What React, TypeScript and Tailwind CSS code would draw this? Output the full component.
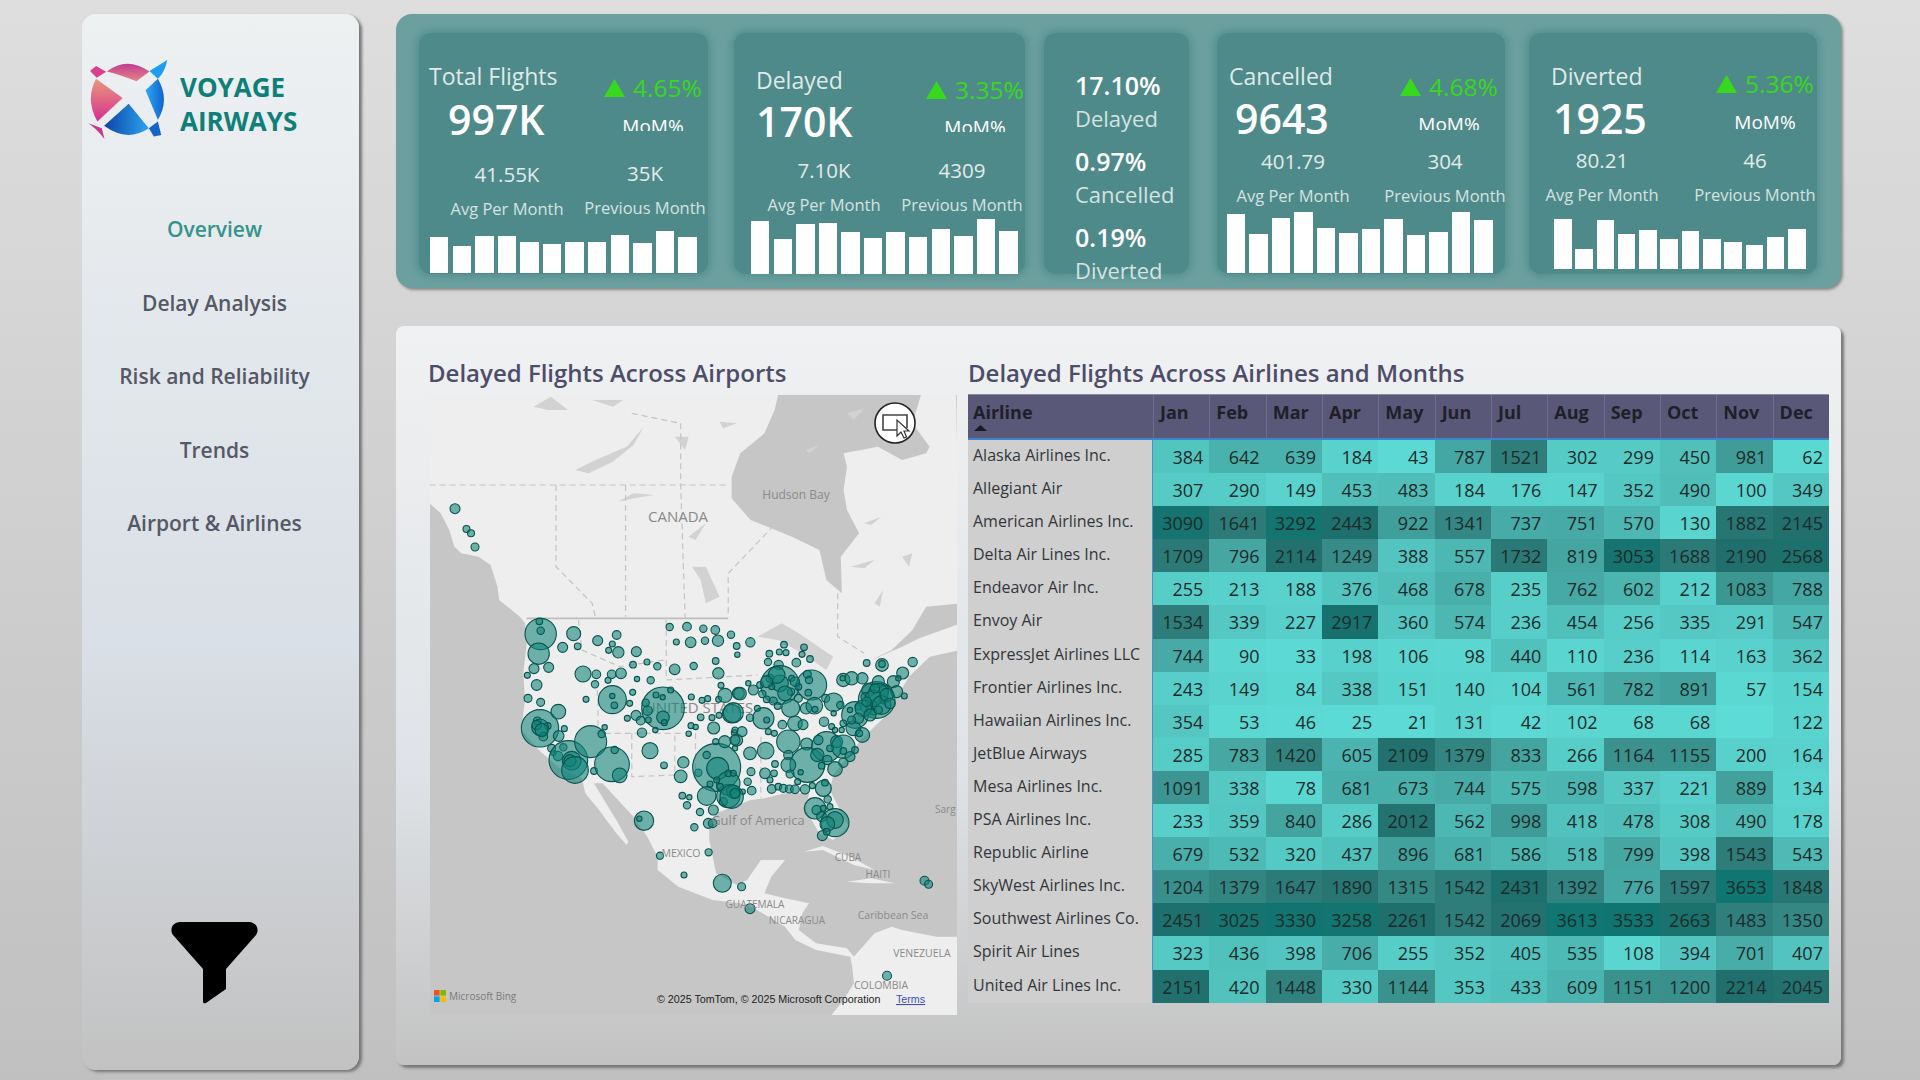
const navItems = ["Overview", "Delay Analysis", "Risk and Reliability", "Trends", "Airport & Airlines"];
const months = ["Jan", "Feb", "Mar", "Apr", "May", "Jun", "Jul", "Aug", "Sep", "Oct", "Nov", "Dec"];

const rows: [string, (number | null)[]][] = [
  ["Alaska Airlines Inc.", [384, 642, 639, 184, 43, 787, 1521, 302, 299, 450, 981, 62]],
  ["Allegiant Air", [307, 290, 149, 453, 483, 184, 176, 147, 352, 490, 100, 349]],
  ["American Airlines Inc.", [3090, 1641, 3292, 2443, 922, 1341, 737, 751, 570, 130, 1882, 2145]],
  ["Delta Air Lines Inc.", [1709, 796, 2114, 1249, 388, 557, 1732, 819, 3053, 1688, 2190, 2568]],
  ["Endeavor Air Inc.", [255, 213, 188, 376, 468, 678, 235, 762, 602, 212, 1083, 788]],
  ["Envoy Air", [1534, 339, 227, 2917, 360, 574, 236, 454, 256, 335, 291, 547]],
  ["ExpressJet Airlines LLC", [744, 90, 33, 198, 106, 98, 440, 110, 236, 114, 163, 362]],
  ["Frontier Airlines Inc.", [243, 149, 84, 338, 151, 140, 104, 561, 782, 891, 57, 154]],
  ["Hawaiian Airlines Inc.", [354, 53, 46, 25, 21, 131, 42, 102, 68, 68, null, 122]],
  ["JetBlue Airways", [285, 783, 1420, 605, 2109, 1379, 833, 266, 1164, 1155, 200, 164]],
  ["Mesa Airlines Inc.", [1091, 338, 78, 681, 673, 744, 575, 598, 337, 221, 889, 134]],
  ["PSA Airlines Inc.", [233, 359, 840, 286, 2012, 562, 998, 418, 478, 308, 490, 178]],
  ["Republic Airline", [679, 532, 320, 437, 896, 681, 586, 518, 799, 398, 1543, 543]],
  ["SkyWest Airlines Inc.", [1204, 1379, 1647, 1890, 1315, 1542, 2431, 1392, 776, 1597, 3653, 1848]],
  ["Southwest Airlines Co.", [2451, 3025, 3330, 3258, 2261, 1542, 2069, 3613, 3533, 2663, 1483, 1350]],
  ["Spirit Air Lines", [323, 436, 398, 706, 255, 352, 405, 535, 108, 394, 701, 407]],
  ["United Air Lines Inc.", [2151, 420, 1448, 330, 1144, 353, 433, 609, 1151, 1200, 2214, 2045]],
];

// heat colour stops, eyeballed from the matrix
const stops: [number, number[]][] = [
  [0, [93, 219, 214]],
  [300, [86, 203, 198]],
  [800, [69, 166, 162]],
  [1500, [47, 126, 123]],
  [2200, [32, 111, 108]],
  [3700, [14, 118, 114]],
];

function heat(v: number | null) {
  if (v === null) return "rgb(93,219,214)";
  for (let i = 1; i < stops.length; i++) {
    if (v <= stops[i][0]) {
      const [a, ca] = stops[i - 1];
      const [b, cb] = stops[i];
      const t = (v - a) / (b - a);
      return `rgb(${ca.map((c, j) => Math.round(c + (cb[j] - c) * t)).join(",")})`;
    }
  }
  return "rgb(14,118,114)";
}

const kpis = [
  {
    title: "Total Flights", value: "997K", delta: "4.65%", avg: "41.55K", prev: "35K",
    bars: [36, 27, 37, 37, 31, 29, 31, 31, 38, 30, 42, 36],
    card: "w-[289px]", upper: "h-[126px]", titleBox: "pt-[28px] pl-[10px] w-[185px]", valueBox: "pl-[19px] mt-[3px]",
    deltaBox: "pt-[40px]", momBox: "w-[98px] h-[28px] pt-[10px]", avgBox: "w-[176px] pt-[1px]", prevBox: "w-[100px]",
    barBox: "pl-[11px] pb-[1px] gap-[4.2px]", barW: "w-[18.4px]",
  },
  {
    title: "Delayed", value: "170K", delta: "3.35%", avg: "7.10K", prev: "4309",
    bars: [53, 35, 50, 51, 42, 36, 42, 37, 45, 38, 55, 43],
    card: "w-[291px] ml-[26px]", upper: "h-[123px]", titleBox: "pt-[32px] pl-[22px] w-[192px]", valueBox: "pl-[0px] mt-[1px]",
    deltaBox: "pt-[42px]", momBox: "w-[98px] h-[27px] pt-[9px]", avgBox: "w-[180px]", prevBox: "w-[96px]",
    barBox: "pl-[17px] pb-0 gap-[4.2px]", barW: "w-[18.4px]",
  },
  {
    title: "Cancelled", value: "9643", delta: "4.68%", avg: "401.79", prev: "304",
    bars: [59, 39, 55, 61, 45, 40, 44, 54, 38, 41, 61, 53],
    card: "w-[288px] ml-[28px]", upper: "h-[114px]", titleBox: "pt-[28px] pl-[12px] w-[183px]", valueBox: "pl-[6px] mt-[2px]",
    deltaBox: "pt-[39px]", momBox: "w-[98px] h-[28px] pt-[9px]", avgBox: "w-[152px]", prevBox: "w-[152px]",
    barBox: "pl-[10px] pb-[1px] gap-[4.1px]", barW: "w-[18.4px]",
  },
  {
    title: "Diverted", value: "1925", delta: "5.36%", avg: "80.21", prev: "46",
    bars: [50, 20, 49, 35, 39, 30, 38, 30, 27, 24, 32, 40],
    card: "w-[288px] ml-[24px]", upper: "h-[113px]", titleBox: "pt-[28px] pl-[22px] w-[187px]", valueBox: "pl-[2px] mt-[2px]",
    deltaBox: "pt-[36px]", momBox: "w-[98px] h-[36px] pt-[10px]", avgBox: "w-[146px]", prevBox: "w-[160px]",
    barBox: "pl-[25px] pb-[5px] gap-[3.8px]", barW: "w-[17.5px]",
  },
];

function Kpi({ k }: { k: (typeof kpis)[number] }) {
  return (
    <div className={`${k.card} h-[241px] shrink-0 flex flex-col rounded-[12px] bg-[#4f8a8a] shadow-[0_0_7px_3px_#55908f]`}>
      <div className={`flex ${k.upper}`}>
        <div className={`${k.titleBox} shrink-0`}>
          <div className="text-[23px] leading-[30px] text-[#dfe9e8] whitespace-nowrap">{k.title}</div>
          <div className={`${k.valueBox} text-[41px] leading-[50px] font-semibold text-white whitespace-nowrap`}>{k.value}</div>
        </div>
        <div className="flex flex-col">
          <div className={`${k.deltaBox} flex items-center gap-[8px] whitespace-nowrap`}>
            <svg width="21" height="18" viewBox="0 0 21 18" className="shrink-0"><path d="M10.5 0 21 18H0z" fill="#38d81c" /></svg>
            <span className="text-[24.5px] leading-[30px] text-[#38d81c]">{k.delta}</span>
          </div>
          <div className={`${k.momBox} overflow-hidden`}>
            <div className="text-[19px] leading-[26px] text-center text-white">MoM%</div>
          </div>
        </div>
      </div>
      <div className="flex">
        <Stat box={k.avgBox} value={k.avg} label="Avg Per Month" />
        <Stat box={k.prevBox} value={k.prev} label="Previous Month" />
      </div>
      <div className={`mt-auto flex items-end ${k.barBox}`}>
        {k.bars.map((h, i) => (
          <div key={i} className={`${k.barW} bg-white`} style={{ height: h }} />
        ))}
      </div>
    </div>
  );
}

function Stat({ box, value, label }: { box: string; value: string; label: string }) {
  return (
    <div className={`${box} shrink-0 flex flex-col items-center`}>
      <div className="text-[20.5px] leading-[28px] text-[#e2eaea]">{value}</div>
      <div className="mt-[9px] text-[16.5px] leading-[24px] text-[#d5e2e1] whitespace-nowrap">{label}</div>
    </div>
  );
}

function RatioCard() {
  const items = [
    ["17.10%", "Delayed", "pt-[37px]"],
    ["0.97%", "Cancelled", "mt-[13px]"],
    ["0.19%", "Diverted", "mt-[13px]"],
  ];
  return (
    <div className="w-[145px] h-[241px] shrink-0 ml-[19px] rounded-[12px] bg-[#4f8a8a] shadow-[0_0_7px_3px_#55908f] pl-[31px]">
      {items.map(([v, l, c]) => (
        <div key={l} className={c}>
          <div className="text-[25px] leading-[30px] font-semibold text-white">{v}</div>
          <div className="mt-[3px] text-[22px] leading-[30px] text-[#d5e2e1]">{l}</div>
        </div>
      ))}
    </div>
  );
}

function Logo() {
  return (
    <svg width="84" height="84" viewBox="48 56 250 250" className="shrink-0">
      <defs>
        <linearGradient id="lgPink" x1="0" y1="0" x2="0" y2="1">
          <stop offset="0" stopColor="#e89a7c" />
          <stop offset="1" stopColor="#d62f90" />
        </linearGradient>
        <linearGradient id="lgTop" x1="0" y1="0" x2="0" y2="1">
          <stop offset="0" stopColor="#c23c92" />
          <stop offset="1" stopColor="#e68484" />
        </linearGradient>
        <linearGradient id="lgBlue" x1="0" y1="0" x2="1" y2="0">
          <stop offset="0" stopColor="#0c45a5" />
          <stop offset="1" stopColor="#2ea4f0" />
        </linearGradient>
        <linearGradient id="lgRight" x1="0" y1="0" x2="1" y2="0">
          <stop offset="0" stopColor="#30a8f2" />
          <stop offset="1" stopColor="#0f63cf" />
        </linearGradient>
      </defs>
      <path d="M60 95 78 80 108 97 80 115Z" fill="#d6408f" />
      <path d="M110 96Q170 50 237 96L198 125Q150 106 110 96Z" fill="url(#lgTop)" />
      <path d="M237 95 290 62Q282 100 262 118Z" fill="#1e9cf0" />
      <path d="M262 118Q298 180 262 240L225 152Z" fill="url(#lgRight)" />
      <path d="M235 265 262 245 272 285 250 290Z" fill="#1565c8" />
      <path d="M102 258 175 192 235 265Q170 308 102 258Z" fill="url(#lgBlue)" />
      <path d="M78 118 157 175 82 245Q45 180 78 118Z" fill="url(#lgPink)" />
      <path d="M55 250 95 265 103 297Q78 265 55 250Z" fill="#c8388a" />
    </svg>
  );
}

function Funnel() {
  return (
    <svg width="87" height="82" viewBox="0 0 87 82">
      <path d="M9 0H78C85 0 89 7 85 13L55 47V67L35 81C33 82 32 81 32 79V47L2 13C-2 7 2 0 9 0Z" fill="#000" />
    </svg>
  );
}

// the map outline was traced from two zoomed crops, so points come in crop units
const a = (p: number[][]) => p.map(([x, y]) => `${420 + x / 2.904},${390 + y / 3}`).join(" ");
const b = (p: number[][]) => p.map(([x, y]) => `${420 + x / 2.904},${700 + y / 3}`).join(" ");

const land =
  a([[-40, 14], [1557, 14], [1570, 780], [1480, 800], [1420, 860], [1380, 930]]) +
  " " +
  b([[1380, 20], [1280, 120], [1200, 225], [1190, 270], [1215, 320], [1245, 380], [1200, 420], [1160, 400], [1120, 330], [1130, 280], [1060, 280], [1000, 295], [960, 300], [860, 340], [840, 370], [840, 420], [860, 520], [920, 555], [950, 540], [990, 480], [1060, 480], [1020, 530], [1000, 580], [1060, 595], [1130, 610], [1110, 640], [1100, 690], [1150, 730], [1240, 745], [1260, 770], [1320, 700], [1370, 680], [1400, 690], [1500, 710], [1570, 710], [1570, 945], [1195, 945], [1230, 900], [1260, 850], [1255, 800], [1250, 770], [1150, 750], [1090, 720], [1060, 680], [970, 625], [930, 610], [850, 600], [750, 560], [690, 510], [690, 470], [660, 410], [620, 350], [530, 250], [505, 250], [570, 360], [605, 425], [600, 435], [570, 400], [520, 330], [480, 280], [470, 235], [400, 200], [345, 150], [295, 90], [300, 40], [305, 0]]) +
  " " +
  a([[300, 850], [310, 760], [305, 700], [290, 680], [230, 630], [225, 590], [205, 525], [170, 500], [120, 490], [100, 470], [85, 420], [60, 370], [28, 340], [-40, 300]]);

const hudson = a([[1040, 14], [1030, 60], [1000, 130], [930, 190], [905, 260], [905, 325], [960, 390], [1020, 415], [1080, 440], [1160, 480], [1180, 570], [1225, 610], [1222, 500], [1275, 430], [1240, 360], [1230, 300], [1240, 230], [1230, 190], [1330, 170], [1400, 210], [1470, 190], [1480, 170], [1430, 100], [1455, 14]]);
const stLawrence = a([[1570, 640], [1470, 650], [1430, 720], [1370, 780], [1300, 815], [1400, 770], [1450, 745], [1570, 700]]);
const lakes = [
  a([[450, 240], [510, 210], [600, 170], [650, 110], [620, 165], [560, 215], [490, 250]]),
  a([[575, 335], [620, 310], [680, 315], [620, 325]]),
  a([[790, 530], [830, 530], [870, 620], [830, 640], [815, 570]]),
  a([[980, 740], [1050, 700], [1100, 730], [1200, 800], [1180, 840], [1110, 790], [1040, 750]]),
  a([[330, 50], [380, 20], [430, 60], [370, 60]]),
  a([[1120, 180], [1160, 165], [1130, 190]]),
  a([[740, 140], [780, 140], [770, 180]]),
  a([[780, 440], [830, 400], [800, 450]]),
  a([[1250, 530], [1320, 510], [1290, 535]]),
  a([[1290, 400], [1340, 380], [1310, 405]]),
  a([[1320, 640], [1345, 600], [1335, 650]]),
  a([[1400, 500], [1430, 490], [1420, 530]]),
  a([[1240, 70], [1290, 55], [1260, 90]]),
  a([[500, 30], [590, 30], [560, 50]]),
  a([[870, 95], [920, 100], [880, 115]]),
];
const cuba = b([[1115, 455], [1170, 438], [1250, 470], [1320, 510], [1260, 495], [1170, 450]]);
const hispaniola = b([[1240, 545], [1310, 535], [1380, 550], [1300, 550]]);

const dashes = [
  a([[28, 285], [895, 285]]),
  a([[395, 285], [395, 530], [500, 640], [510, 685]]),
  a([[597, 285], [597, 680]]),
  a([[757, 100], [757, 285], [770, 685]]),
  a([[615, 70], [757, 100]]),
  a([[895, 670], [895, 550], [1020, 415]]),
  a([[1213, 610], [1213, 740], [1290, 790]]),
  a([[460, 690], [470, 780], [580, 830], [710, 810]]),
  a([[715, 690], [715, 870], [980, 855]]),
  a([[515, 900], [515, 930]]),
  b([[517, 0], [517, 100], [770, 100]]),
  b([[615, 100], [615, 230], [740, 225], [740, 100]]),
  b([[800, 100], [800, 250]]),
  b([[990, 110], [990, 295]]),
];

// bubbles: [x, y, r], crop units again, 3x of the page
const west: number[][] = [
  [62, 72, 47], [58, 34, 10], [62, 62, 11], [56, 131, 32], [161, 71, 21], [128, 112, 15], [173, 109, 10], [42, 176, 15], [86, 172, 15], [22, 196, 9], [233, 92, 15], [290, 75, 13], [277, 102, 9], [266, 121, 9], [295, 127, 17], [349, 125, 15], [189, 192, 24], [229, 193, 13], [275, 193, 13], [303, 190, 16], [264, 211, 9], [225, 223, 11], [339, 164, 10], [381, 156, 9], [412, 169, 11], [351, 207, 8], [392, 211, 11], [464, 178, 16], [521, 168, 11], [449, 51, 11], [501, 50, 13], [550, 56, 11], [586, 60, 13], [633, 74, 11], [469, 96, 9], [512, 97, 16], [555, 92, 11], [594, 92, 17], [587, 153, 10], [595, 190, 17], [50, 225, 16], [24, 265, 12], [62, 277, 12], [198, 268, 9], [277, 269, 42], [277, 258, 8], [283, 286, 10], [329, 280, 9], [338, 247, 9], [429, 295, 64], [408, 255, 9], [428, 262, 8], [452, 240, 9], [377, 278, 11], [383, 302, 14], [348, 316, 15], [322, 325, 9], [362, 332, 13], [385, 330, 9], [429, 322, 19], [433, 338, 9], [514, 261, 9], [546, 271, 9], [563, 266, 9], [596, 268, 9], [603, 226, 9], [615, 256, 21], [655, 250, 18], [635, 311, 28], [597, 316, 9], [576, 323, 9], [542, 322, 10], [513, 347, 9], [527, 351, 8], [581, 354, 18], [406, 360, 8], [366, 368, 14], [506, 371, 8],
  [60, 355, 56], [52, 333, 12], [83, 348, 10], [60, 352, 25], [70, 380, 13], [50, 345, 14], [65, 360, 20], [115, 305, 22], [133, 356, 9], [116, 378, 16], [95, 415, 12], [100, 428, 8], [130, 412, 11], [114, 438, 14], [145, 450, 58], [155, 452, 28], [150, 452, 18], [165, 480, 40], [222, 483, 10], [212, 395, 48], [245, 372, 11], [254, 352, 8], [276, 463, 52], [284, 420, 11], [299, 496, 22], [390, 422, 24], [432, 466, 10], [490, 457, 17], [482, 499, 19], [535, 488, 11], [590, 472, 72], [593, 475, 33], [560, 435, 11], [587, 395, 9], [614, 395, 18], [643, 368, 9], [650, 390, 18], [560, 558, 28], [570, 522, 9], [625, 558, 35], [625, 520, 35], [600, 530, 10], [590, 510, 9], [625, 490, 10], [640, 490, 9], [487, 557, 10], [508, 562, 8], [501, 586, 11], [540, 606, 11], [580, 600, 15], [372, 632, 29], [358, 626, 8], [523, 652, 11], [565, 640, 15], [578, 640, 13], [640, 545, 20], [610, 575, 12],
];
const east: number[][] = [
  [20, 18, 10], [22, 44, 8], [61, 7, 14], [162, 14, 10], [222, 22, 10], [118, 41, 10], [148, 36, 9], [168, 38, 9], [216, 43, 9], [114, 66, 11], [146, 75, 14], [199, 68, 13], [240, 57, 10], [410, 69, 10], [456, 75, 19], [456, 72, 10], [548, 66, 14], [518, 99, 18],
  [150, 135, 58], [150, 130, 25], [120, 115, 12], [245, 135, 45], [232, 103, 12], [237, 120, 11], [185, 115, 9], [55, 130, 8], [90, 135, 10], [70, 150, 15], [125, 140, 9], [97, 162, 11], [30, 161, 19], [183, 155, 11], [235, 158, 10], [205, 140, 10], [205, 175, 12], [130, 183, 12], [110, 178, 10], [143, 198, 10], [182, 205, 27], [228, 205, 17], [253, 197, 25], [255, 208, 9], [287, 175, 12], [311, 187, 28], [331, 195, 11], [311, 220, 8],
  [140, 105, 25], [165, 160, 22], [110, 125, 18], [195, 125, 14],
  [340, 120, 20], [365, 115, 20], [338, 115, 8], [397, 115, 17], [440, 180, 55], [445, 125, 18], [415, 150, 20], [405, 170, 12], [425, 195, 15], [460, 180, 12], [490, 125, 18], [500, 155, 18], [505, 115, 8], [523, 168, 9], [385, 200, 10], [430, 215, 10], [462, 150, 15], [375, 225, 40], [360, 210, 8], [340, 250, 10], [370, 265, 22], [397, 285, 22], [388, 280, 10], [335, 270, 8],
  [445, 160, 30], [430, 175, 25], [455, 195, 28], [400, 205, 25], [420, 225, 18], [470, 165, 20], [435, 145, 14], [480, 190, 16], [410, 185, 14], [445, 210, 12], [385, 235, 16], [365, 240, 12],
  [100, 235, 32], [110, 240, 9], [60, 233, 11], [82, 205, 9], [195, 250, 22], [219, 254, 15], [157, 254, 13], [282, 245, 14], [305, 260, 9], [315, 270, 8], [115, 275, 9], [133, 280, 9], [10, 218, 30], [36, 275, 15], [15, 270, 9], [15, 300, 15], [15, 325, 8],
  [175, 305, 35], [230, 312, 18], [232, 375, 52], [175, 345, 14], [175, 375, 22], [180, 402, 12], [212, 397, 8], [135, 372, 10], [105, 400, 16], [132, 400, 10], [107, 332, 25], [60, 340, 19], [63, 395, 12], [120, 420, 9], [53, 425, 11],
  [290, 320, 45], [265, 300, 14], [320, 305, 18], [340, 320, 35], [262, 345, 20], [300, 325, 10], [340, 333, 10], [375, 330, 10], [360, 350, 15], [292, 360, 14], [275, 377, 10], [340, 368, 14], [315, 387, 22],
  [125, 447, 13], [145, 440, 10], [160, 445, 12], [178, 447, 12], [195, 448, 13], [225, 448, 14], [247, 437, 9], [203, 425, 9], [65, 452, 13], [38, 455, 8], [280, 445, 24], [285, 428, 10], [293, 478, 11], [300, 500, 9],
  [255, 505, 32], [260, 510, 14], [275, 530, 15], [315, 548, 42], [315, 540, 25], [292, 552, 22], [280, 505, 9], [277, 587, 15], [290, 575, 10], [5, 470, 35], [15, 460, 15],
];
const bubbles: number[][] = [
  ...west.map(([x, y, r]) => [520 + x / 3, 610 + y / 3, r / 3]),
  ...east.map(([x, y, r]) => [730 + x / 3, 640 + y / 3, r / 3]),
  [455, 508.7, 5], [466.5, 529, 3.5], [471, 533.3, 3.5], [475, 547, 4],
  [660, 855.7, 3.6], [708.6, 852.3, 3.6], [684, 875, 3], [722.3, 883.3, 9], [741.6, 886.7, 4], [750, 908.7, 5], [924.5, 880.7, 4.5], [928.6, 884.3, 4], [887, 975.7, 4.5],
];

const labelClass = "fill-[#8a8a8a] font-['Open_Sans',sans-serif]";

function MapPanel() {
  return (
    <svg width="527" height="620" viewBox="430 395 527 620" className="block bg-[#c6c6c6]">
      <polygon points={land} fill="#eeeeee" />
      <polygon points={hudson} fill="#c6c6c6" />
      <polygon points={stLawrence} fill="#c6c6c6" />
      {lakes.map((p, i) => <polygon key={i} points={p} fill="#d2d2d2" />)}
      <polygon points={cuba} fill="#eeeeee" />
      <polygon points={hispaniola} fill="#eeeeee" />
      {dashes.map((p, i) => (
        <polyline key={i} points={p} fill="none" stroke="#c4c4c4" strokeWidth="1.2" strokeDasharray="6 4" />
      ))}
      <polyline points={a([[310, 685], [895, 685]])} fill="none" stroke="#bdbdbd" strokeWidth="1.6" />
      <text x="678" y="522" textAnchor="middle" fontSize="15" className={labelClass}>CANADA</text>
      <text x="796" y="499" textAnchor="middle" fontSize="12" className={labelClass}>Hudson Bay</text>
      <text x="699" y="713" textAnchor="middle" fontSize="15" className={labelClass}>UNITED STATES</text>
      {bubbles.map(([x, y, r], i) => (
        <circle key={i} cx={x} cy={y} r={r} fill="#0f8378" fillOpacity="0.58" stroke="#0a544f" strokeWidth="1.1" />
      ))}
      <text x="758" y="825" textAnchor="middle" fontSize="13" className={labelClass}>Gulf of America</text>
      <text x="681" y="857" textAnchor="middle" fontSize="10.5" className={labelClass}>MEXICO</text>
      <text x="848" y="861" textAnchor="middle" fontSize="10" className={labelClass}>CUBA</text>
      <text x="878" y="878" textAnchor="middle" fontSize="10" className={labelClass}>HAITI</text>
      <text x="755" y="908" textAnchor="middle" fontSize="10" className={labelClass}>GUATEMALA</text>
      <text x="797" y="924" textAnchor="middle" fontSize="10" className={labelClass}>NICARAGUA</text>
      <text x="893" y="919" textAnchor="middle" fontSize="10.5" className={labelClass}>Caribbean Sea</text>
      <text x="922" y="957" textAnchor="middle" fontSize="10.5" className={labelClass}>VENEZUELA</text>
      <text x="881" y="989" textAnchor="middle" fontSize="10.5" className={labelClass}>COLOMBIA</text>
      <text x="935" y="813" fontSize="10" className={labelClass}>Sarg</text>
      <rect x="434" y="990" width="5.6" height="5.6" fill="#f25022" />
      <rect x="440.4" y="990" width="5.6" height="5.6" fill="#7fba00" />
      <rect x="434" y="996.4" width="5.6" height="5.6" fill="#00a4ef" />
      <rect x="440.4" y="996.4" width="5.6" height="5.6" fill="#ffb900" />
      <text x="449" y="1000" fontSize="10" fill="#7a7a7a" className="font-['Open_Sans',sans-serif]">Microsoft Bing</text>
      <text x="657" y="1003" fontSize="10.7" fill="#222" className="font-['Liberation_Sans',sans-serif]">© 2025 TomTom, © 2025 Microsoft Corporation</text>
      <text x="896" y="1003" fontSize="10.7" fill="#3a4fb0" textDecoration="underline" className="font-['Liberation_Sans',sans-serif]">Terms</text>
      <circle cx="895" cy="423" r="20" fill="#fff" stroke="#222" strokeWidth="1.6" />
      <path d="M906 430H883V415H907V428" fill="none" stroke="#444" strokeWidth="1.6" />
      <path d="M897 420V436L901 432 904 438 906.5 437 904 431H909Z" fill="#fff" stroke="#333" strokeWidth="1.2" />
    </svg>
  );
}

function Matrix() {
  return (
    <div className="w-[861px] mt-[-1px]">
      <div className="flex h-[46px] bg-[#5a5878] border-t border-[#8d8ca3] border-b-2 border-b-[#3f83c9] text-[18px] leading-[24px] font-bold text-[#1f1f28]">
        <div className="w-[185px] shrink-0 pl-[5px] pt-[5px] relative">
          Airline
          <svg width="13" height="6" viewBox="0 0 13 6" className="absolute left-[6px] top-[30px]"><path d="M6.5 0 13 6H0z" fill="#1a1a22" /></svg>
        </div>
        {months.map((m) => (
          <div key={m} className="flex-1 border-l border-[#6f6d8c] pl-[6px] pt-[5px]">{m}</div>
        ))}
      </div>
      {rows.map(([name, vals]) => (
        <div key={name} className="flex h-[33.1px]">
          <div className="w-[185px] shrink-0 pl-[5px] text-[16px] font-medium leading-[31px] text-[#33363a] bg-[#cfcfcf] whitespace-nowrap border-r border-[#4a92cf]">{name}</div>
          {vals.map((v, i) => (
            <div
              key={i}
              className="flex-1 pr-[6px] pt-[2px] text-right text-[18px] leading-[30px] text-[#1d2b2b]"
              style={{ backgroundColor: heat(v) }}
            >
              {v}
            </div>
          ))}
        </div>
      ))}
    </div>
  );
}

export default function App() {
  return (
    <div className="w-[1920px] h-[1080px] overflow-hidden flex pl-[82px] pt-[14px] bg-gradient-to-b from-[#dedede] to-[#c0c0c0] font-['Open_Sans','Noto_Sans',sans-serif]">
      <aside className="w-[277px] h-[1056px] shrink-0 rounded-[14px] flex flex-col bg-gradient-to-b from-[#eef1f2] via-[#d9dfe6] via-60% to-[#c2c2c2] shadow-[3px_2px_3px_#777]">
        <div className="flex items-center pl-[4px] pt-[44px] gap-[10px]">
          <Logo />
          <div className="pt-[8px] text-[26px] leading-[34px] font-bold text-[#0f7f79]">
            VOYAGE
            <br />
            AIRWAYS
          </div>
        </div>
        <nav className="mt-[67px] pr-[12px] flex flex-col items-center gap-[33.5px]">
          {navItems.map((n, i) => (
            <div key={n} className={`text-[21px] leading-[40px] font-semibold ${i === 0 ? "text-[#35938b]" : "text-[#555866]"}`}>
              {n}
            </div>
          ))}
        </nav>
        <div className="mt-auto mb-[66px] pr-[12px] flex justify-center">
          <Funnel />
        </div>
      </aside>
      <main className="ml-[37px] w-[1445px] shrink-0 flex flex-col gap-[38px]">
        <section className="h-[274px] rounded-[16px] bg-[#6ba09f] shadow-[2px_2px_3px_#888] flex pl-[23px] pt-[19px]">
          <Kpi k={kpis[0]} />
          <Kpi k={kpis[1]} />
          <RatioCard />
          <Kpi k={kpis[2]} />
          <Kpi k={kpis[3]} />
        </section>
        <section className="h-[739px] rounded-[8px] bg-gradient-to-b from-[#f0f1f2] via-[#dfe3e7] via-60% to-[#c3c3c3] shadow-[3px_3px_3px_#777] flex pl-[34px] pt-[31px]">
          <div className="w-[527px] shrink-0">
            <h2 className="ml-[-2px] text-[24px] leading-[32px] font-semibold text-[#4d4d6b] whitespace-nowrap">Delayed Flights Across Airports</h2>
            <div className="mt-[6px]"><MapPanel /></div>
          </div>
          <div className="ml-[11px] shrink-0">
            <h2 className="text-[24px] leading-[32px] font-semibold text-[#4d4d6b] whitespace-nowrap">Delayed Flights Across Airlines and Months</h2>
            <div className="mt-[6px]"><Matrix /></div>
          </div>
        </section>
      </main>
    </div>
  );
}
